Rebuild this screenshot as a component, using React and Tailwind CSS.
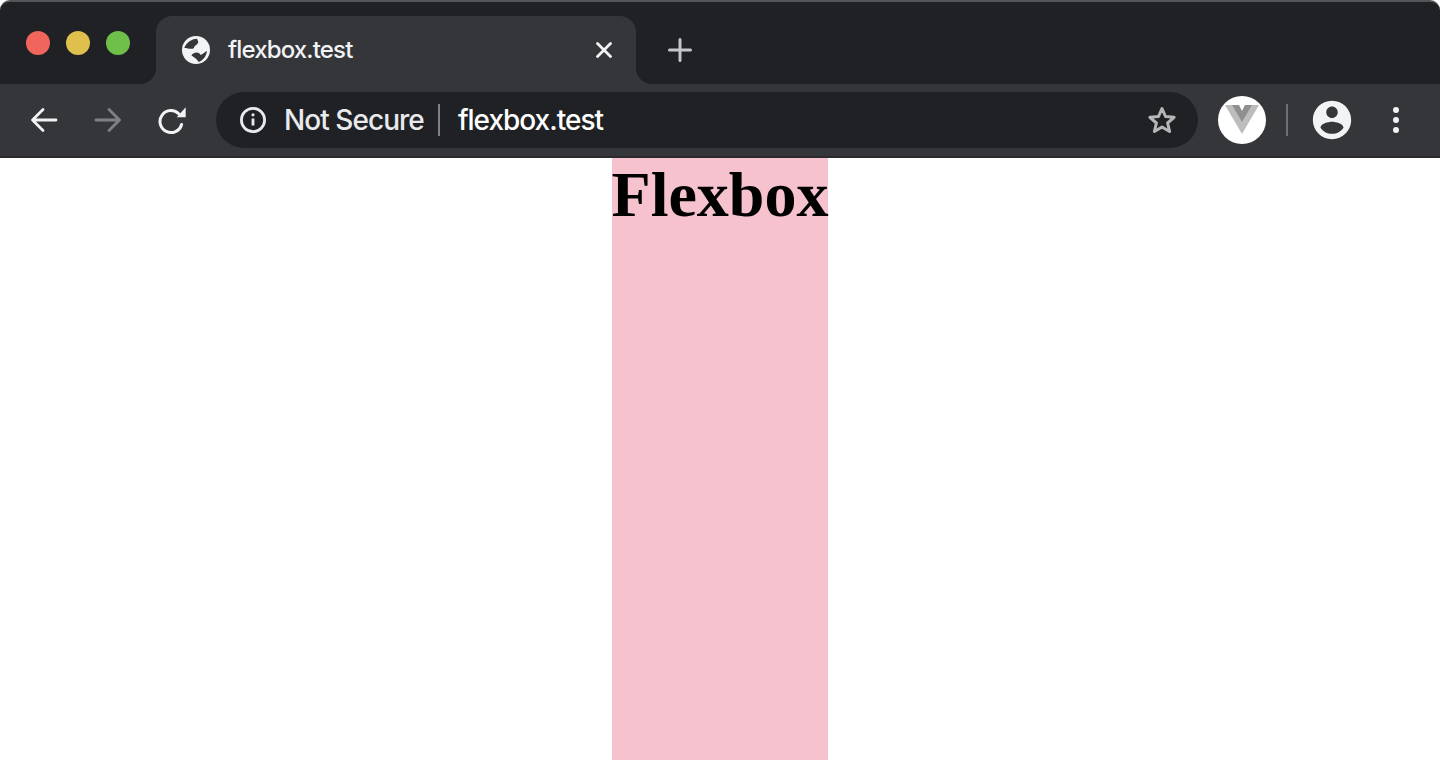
const dark = "#202124";

function IconBox({ children, className = "" }) {
  return <div className={`flex items-center justify-center shrink-0 ${className}`}>{children}</div>;
}

function Globe() {
  return (
    <svg width="28" height="28" viewBox="0 0 84 84">
      <circle cx="42" cy="42" r="42" fill="#f1f3f4" />
      <path d="M7 36C12 20 28 9 45 8L49 18C47 27 38 27 36 35C31 42 18 36 7 36z" fill="#35363a" />
      <path d="M28 58C37 47 51 48 55 56C61 58 66 49 75 45C73 60 64 73 50 78C46 69 35 65 28 58z" fill="#35363a" />
    </svg>
  );
}

function Tab() {
  return (
    <div className="relative flex items-center w-[480px] h-[68px] mt-[14px] ml-[156px] pl-[26px] pr-6 bg-[#35363a] rounded-t-2xl">
      {/* concave corners at the foot of the tab */}
      <div className="absolute -left-4 bottom-0 w-4 h-4 bg-[#35363a]">
        <div className="w-full h-full bg-[#202124] rounded-br-2xl" />
      </div>
      <div className="absolute -right-4 bottom-0 w-4 h-4 bg-[#35363a]">
        <div className="w-full h-full bg-[#202124] rounded-bl-2xl" />
      </div>
      <IconBox className="w-7 h-7">
        <Globe />
      </IconBox>
      <span className="ml-[18px] text-2xl leading-8 font-[450] text-[#f1f3f4] font-['Inter',sans-serif] tracking-[-0.85px]">flexbox.test</span>
      <svg className="ml-auto" width="16" height="16" viewBox="0 0 16 16" stroke="#f1f3f4" strokeWidth="2.800" strokeLinecap="round">
        <path d="M1.500 1.500l13 13M14.500 1.500l-13 13" />
      </svg>
    </div>
  );
}

function Toolbar() {
  return (
    <div className="flex items-center h-[72px] pl-3 bg-[#35363a]">
      <IconBox className="w-16 h-14">
        <svg width="28" height="26" viewBox="0 0 28 26" fill="none" stroke="#f1f3f4" strokeWidth="2.800" strokeLinecap="round" strokeLinejoin="round">
          <path d="M26 13H3M13 2.500L2.500 13 13 23.500" />
        </svg>
      </IconBox>
      <IconBox className="w-16 h-14">
        <svg width="28" height="26" viewBox="0 0 28 26" fill="none" stroke="#7f8083" strokeWidth="2.800" strokeLinecap="round" strokeLinejoin="round">
          <path d="M2 13h23M15 2.500L25.500 13 15 23.500" />
        </svg>
      </IconBox>
      <IconBox className="w-16 h-14">
        <svg width="30" height="30" viewBox="0 0 30 30" fill="none">
          <path d="M22 9A11 11 0 1 0 24.600 19.500" stroke="#f1f3f4" strokeWidth="3" strokeLinecap="round" />
          <path d="M28.700 2.300V12.300H19.700z" fill="#f1f3f4" />
        </svg>
      </IconBox>

      <div className="flex items-center w-[982px] h-14 ml-3 pl-6 pr-[21px] rounded-full bg-[#202124]">
        <svg width="26" height="26" viewBox="0 0 26 26" fill="none" stroke="#e8eaed" strokeWidth="2.800">
          <circle cx="13" cy="13" r="11.600" />
          <path d="M13 11.500v7" />
          <circle cx="13" cy="7.800" r="1.600" fill="#e8eaed" stroke="none" />
        </svg>
        <span className="ml-[18px] text-[28px] leading-9 font-[450] text-[#e8eaed] font-['Inter',sans-serif] tracking-[-0.95px]">Not Secure</span>
        <div className="w-[2px] h-8 ml-[14px] bg-[#7f8083]" />
        <span className="ml-[18px] text-[28px] leading-9 font-[450] text-white font-['Inter',sans-serif] tracking-[-1px]">flexbox.test</span>
        <svg className="ml-auto" width="30" height="30" viewBox="0 0 30 30" fill="none" stroke="#b4b6b8" strokeWidth="3" strokeLinejoin="round">
          <path d="M15 3.500l3.500 8 8.600.8-6.500 5.700 2 8.500-7.600-4.500-7.600 4.500 2-8.500-6.500-5.700 8.600-.8z" />
        </svg>
      </div>

      <IconBox className="w-12 h-12 ml-5 rounded-full bg-white">
        <svg width="36" height="32" viewBox="0 0 36 32">
          <path d="M1 1h10l7 12 7-12h10L18 30z" fill="#bdbdbd" />
          <path d="M8 1h7l3 6 3-6h7L18 18z" fill="#8f8f8f" />
        </svg>
      </IconBox>
      <div className="w-[2px] h-8 ml-5 bg-[#6f7073]" />
      <IconBox className="w-[38px] h-[38px] ml-[25px]">
        <svg width="46" height="46" viewBox="0 0 24 24" fill="#f1f3f4" className="shrink-0">
          <path d="M12 2C6.480 2 2 6.480 2 12s4.480 10 10 10 10-4.480 10-10S17.520 2 12 2zm0 3c1.660 0 3 1.340 3 3s-1.340 3-3 3-3-1.340-3-3 1.340-3 3-3zm0 14.200c-2.500 0-4.710-1.280-6-3.220.030-1.990 4-3.080 6-3.080 1.990 0 5.970 1.090 6 3.080-1.290 1.940-3.500 3.220-6 3.220z" />
        </svg>
      </IconBox>
      <div className="flex flex-col items-center gap-1 ml-[42px]">
        <span className="w-[6px] h-[6px] rounded-full bg-[#f1f3f4]" />
        <span className="w-[6px] h-[6px] rounded-full bg-[#f1f3f4]" />
        <span className="w-[6px] h-[6px] rounded-full bg-[#f1f3f4]" />
      </div>
    </div>
  );
}

export default function App() {
  return (
    <div className="flex flex-col h-screen overflow-hidden bg-white">
      <header className="shrink-0 rounded-t-[10px] overflow-hidden border-t-2 border-[#55565a]" style={{ backgroundColor: dark }}>
        <div className="relative flex h-[82px]">
          <div className="absolute left-[26px] top-[29px] flex gap-4">
            <span className="w-6 h-6 rounded-full bg-[#f0665c]" />
            <span className="w-6 h-6 rounded-full bg-[#e0c04c]" />
            <span className="w-6 h-6 rounded-full bg-[#6ec04a]" />
          </div>
          <Tab />
          <svg className="ml-8 mt-[36px]" width="24" height="24" viewBox="0 0 24 24" stroke="#c4c7c9" strokeWidth="3" strokeLinecap="round">
            <path d="M12 1.500v21M1.500 12h21" />
          </svg>
        </div>
        <Toolbar />
        <div className="h-[2px] bg-[#2a2a2c]" />
      </header>
      <main className="flex flex-1 justify-center min-h-0">
        <div className="h-full bg-[#f5c2cd]">
          <h1 className="text-[64px] leading-[73px] font-bold text-black font-['Liberation_Serif',serif]">Flexbox</h1>
        </div>
      </main>
    </div>
  );
}
